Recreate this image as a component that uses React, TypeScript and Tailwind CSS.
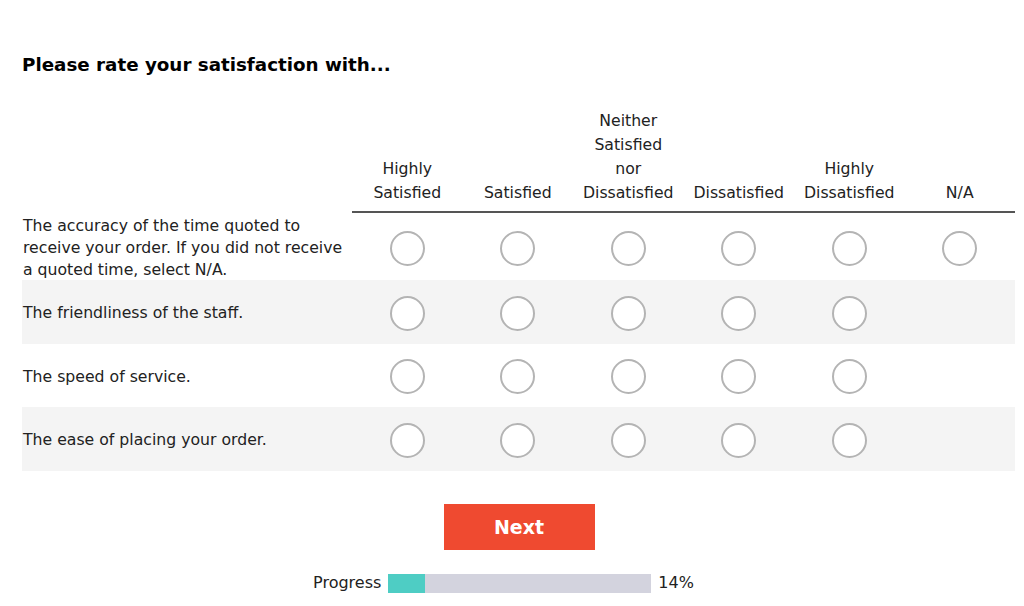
import React from "react";

const columns = [
  ["Highly", "Satisfied"],
  ["Satisfied"],
  ["Neither", "Satisfied", "nor", "Dissatisfied"],
  ["Dissatisfied"],
  ["Highly", "Dissatisfied"],
  ["N/A"],
];

const questions = [
  {
    text: "The accuracy of the time quoted to receive your order. If you did not receive a quoted time, select N/A.",
    na: true,
    h: "h-[67px]",
  },
  { text: "The friendliness of the staff.", na: false, h: "h-[64px]" },
  { text: "The speed of service.", na: false, h: "h-[63px]" },
  { text: "The ease of placing your order.", na: false, h: "h-[64px]" },
];

function Radio() {
  return (
    <span className="block w-[35px] h-[35px] rounded-full border-2 border-[#b4b4b4] bg-white" />
  );
}

export default function App() {
  const progress = 14;
  return (
    <div
      className="w-[1024px] h-[606px] bg-white text-[#222] overflow-hidden"
      style={{ fontFamily: '"DejaVu Sans", Verdana, sans-serif' }}
    >
      <div className="pl-[22px] pr-[9px] pt-[52px]">
        <h1 className="text-[18.3px] font-bold text-black leading-[26px]">
          Please rate your satisfaction with...
        </h1>

        <div className="mt-[31px]">
          {/* header */}
          <div className="grid grid-cols-[330px_repeat(6,1fr)]">
            <div />
            {columns.map((lines, i) => (
              <div
                key={i}
                className="flex flex-col justify-end items-center text-center text-[15.7px] leading-[24px] pb-[6px] border-b-2 border-[#555] whitespace-nowrap"
              >
                {lines.map((l) => (
                  <span key={l}>{l}</span>
                ))}
              </div>
            ))}
          </div>

          {/* rows */}
          {questions.map((q, ri) => (
            <div
              key={ri}
              className={`grid grid-cols-[330px_repeat(6,1fr)] items-center ${q.h} ${
                ri % 2 === 1 ? "bg-[#f4f4f4]" : "bg-white"
              }`}
            >
              <div className="text-[15.7px] leading-[22px] pl-[1px] pr-[2px] pt-[2px]">{q.text}</div>
              {columns.map((_, ci) => (
                <div key={ci} className="flex justify-center pt-[2px]">
                  {ci < 5 || q.na ? <Radio /> : null}
                </div>
              ))}
            </div>
          ))}
        </div>

        <div className="flex justify-center mt-[33px] pl-[1px]">
          <button className="w-[151px] h-[46px] bg-[#ef4a30] text-white font-bold text-[19px]">
            Next
          </button>
        </div>

        <div className="flex items-center justify-center gap-[7px] mt-[21px] pr-[30px] text-[16px]">
          <span>Progress</span>
          <div className="w-[263px] h-[19px] bg-[#d3d3de]">
            <div className="h-full bg-[#4ecdc4]" style={{ width: `${progress}%` }} />
          </div>
          <span>{progress}%</span>
        </div>
      </div>
    </div>
  );
}
